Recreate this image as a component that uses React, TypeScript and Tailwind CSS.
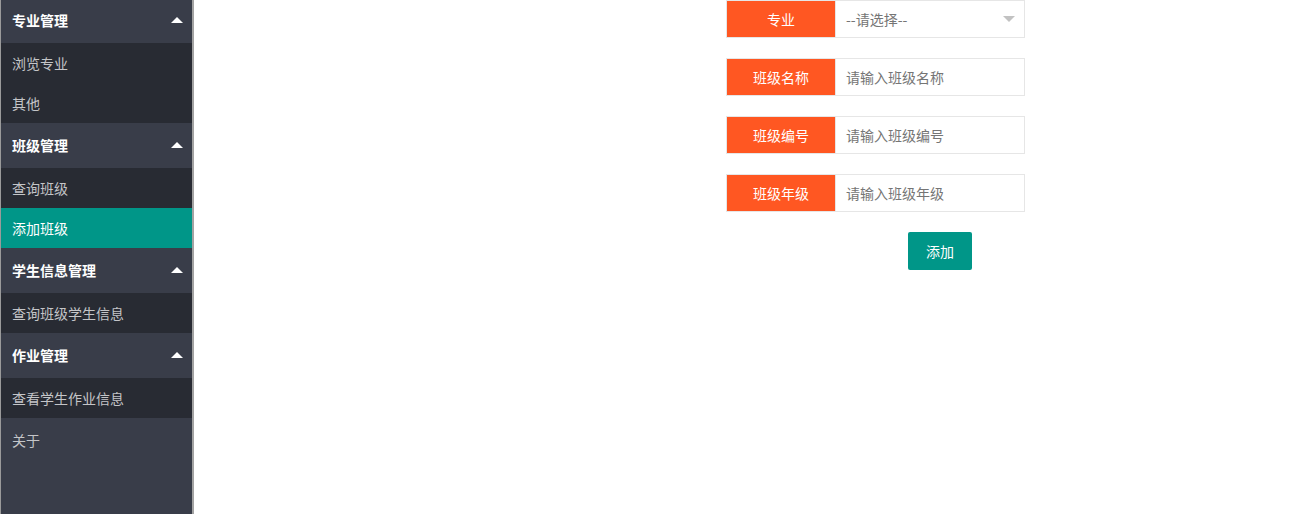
import { FunctionComponent } from "react";

type Group = { title: string; items: { label: string; active?: boolean }[]; first?: boolean };

const groups: Group[] = [
  { title: "专业管理", first: true, items: [{ label: "浏览专业" }, { label: "其他" }] },
  { title: "班级管理", items: [{ label: "查询班级" }, { label: "添加班级", active: true }] },
  { title: "学生信息管理", items: [{ label: "查询班级学生信息" }] },
  { title: "作业管理", items: [{ label: "查看学生作业信息" }] },
];

const Caret: FunctionComponent<{ color?: string; down?: boolean }> = ({ color = "#ffffff", down }) => (
  <svg width="12" height="6" viewBox="0 0 12 6">
    <path d={down ? "M0 0 L6 6 L12 0 Z" : "M0 6 L6 0 L12 6 Z"} fill={color} />
  </svg>
);

const Sidebar: FunctionComponent = () => {
  return (
    <div className="w-[194px] h-[514px] shrink-0 bg-[#393d49] border-l border-l-[#9a9a9a] border-r-2 border-r-[#a3a3a3] flex flex-col">
      {groups.map((g) => (
        <div key={g.title}>
          <div
            className={`${g.first ? "h-[43px] pb-[3px]" : "h-[45px] pb-[2px]"} flex items-center justify-between pl-[11px] pr-[9px] text-white font-bold text-sm`}
          >
            <span>{g.title}</span>
            <Caret />
          </div>
          {g.items.map((it) => (
            <div
              key={it.label}
              className={`h-[40px] flex items-center pl-[11px] pb-[1px] text-sm ${
                it.active ? "bg-[#009688] text-white" : "bg-[#282b33] text-[#c4c5c8]"
              }`}
            >
              {it.label}
            </div>
          ))}
        </div>
      ))}
      <div className="h-[45px] flex items-center pl-[11px] pb-[2px] text-sm text-[#c4c5c8]">关于</div>
    </div>
  );
};

const Field: FunctionComponent<{ label: string; placeholder: string; select?: boolean }> = ({
  label,
  placeholder,
  select,
}) => {
  return (
    <div className="flex h-[38px] w-[299px]">
      <div className="w-[109px] h-full border border-[#e6e6e6] border-r-0 bg-[#ff5722] text-white text-sm flex items-center justify-center pb-[1px]">
        {label}
      </div>
      <div className="flex-1 h-full border border-[#e6e6e6] bg-white flex items-center justify-between pl-[10px] pr-[9px] pb-[1px] text-sm text-[#757575]">
        <span>{placeholder}</span>
        {select && <Caret color="#c2c2c2" down />}
      </div>
    </div>
  );
};

export default function App() {
  return (
    <div
      className="flex w-[1299px] h-[514px] bg-white overflow-hidden"
      style={{ fontFamily: '"Noto Sans CJK SC", "Noto Sans", sans-serif' }}
    >
      <Sidebar />
      <div className="pl-[532px] flex flex-col gap-[20px]">
        <Field label="专业" placeholder="--请选择--" select />
        <Field label="班级名称" placeholder="请输入班级名称" />
        <Field label="班级编号" placeholder="请输入班级编号" />
        <Field label="班级年级" placeholder="请输入班级年级" />
        <div className="pl-[182px]">
          <button className="w-[64px] h-[38px] rounded-[2px] bg-[#009688] text-white text-sm pb-[1px]">添加</button>
        </div>
      </div>
    </div>
  );
}
